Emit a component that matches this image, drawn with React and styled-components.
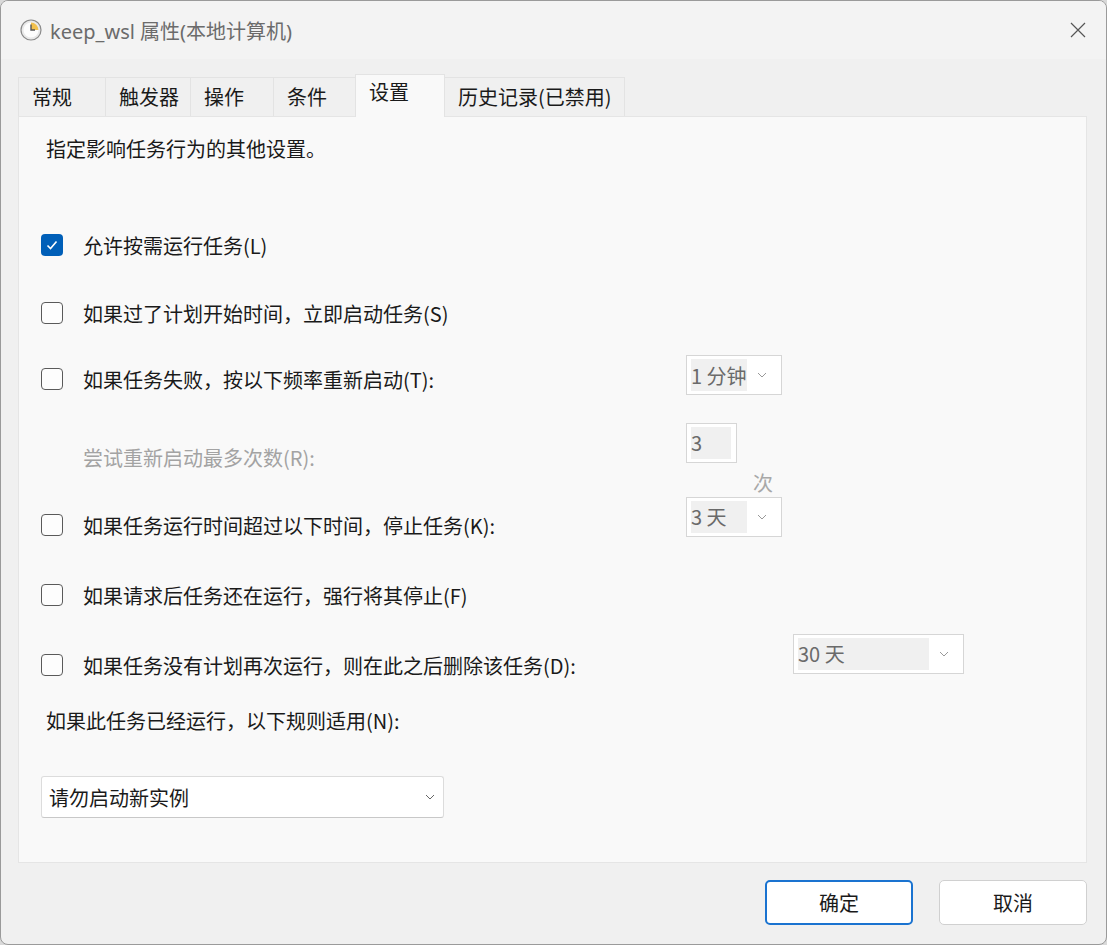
import React from 'react';
import styled, { createGlobalStyle } from 'styled-components';

const Global = createGlobalStyle`
  html, body { margin: 0; padding: 0; background: #d9d9d9; }
  body { font-family: 'Noto Sans CJK SC', 'Noto Sans', sans-serif; }
`;

const Window = styled.div`
  width: 1105px;
  height: 943px;
  background: #f0f0f0;
  border: 1px solid #9a9a9a;
  border-radius: 8px;
  display: flex;
  flex-direction: column;
  overflow: hidden;
  color: #1a1a1a;
`;

const TitleBar = styled.div`
  height: 58px;
  display: flex;
  align-items: center;
  padding: 0 20px 0 19px;
  gap: 8px;
  font-size: 20px;
  color: #6b6b6b;
  background: #f3f3f3;
`;

const Title = styled.span`
  flex: 1;
  font-family: 'Noto Sans', 'Noto Sans CJK SC', sans-serif;
`;

const Body = styled.div`
  flex: 1;
  padding: 14px 19px 0 17px;
  display: flex;
  flex-direction: column;
`;

const Tabs = styled.div`
  display: flex;
  align-items: flex-end;
  height: 43px;
`;

const Tab = styled.div`
  width: ${p => p.w}px;
  height: ${p => (p.active ? 43 : 39)}px;
  box-sizing: border-box;
  padding: ${p => (p.active ? '2px 0 0 13px' : '4px 0 0 13px')};
  font-size: 20px;
  background: ${p => (p.active ? '#f9f9f9' : '#f0f0f0')};
  border: 1px solid #e3e3e3;
  border-bottom: none;
  margin-right: -1px;
  position: relative;
  z-index: ${p => (p.active ? 2 : 1)};
  margin-bottom: ${p => (p.active ? '-1px' : 0)};
  white-space: nowrap;
`;

const Panel = styled.div`
  height: 747px;
  box-sizing: border-box;
  background: #f9f9f9;
  border: 1px solid #e5e5e5;
  padding: 19px 0 0 22px;
  display: flex;
  flex-direction: column;
`;

const Text = styled.div`
  font-size: 20px;
  line-height: 26px;
  padding-left: ${p => p.indent || 0}px;
  color: ${p => (p.disabled ? '#a3a3a3' : '#1a1a1a')};
`;

const Row = styled.div`
  margin-top: ${p => p.mt}px;
  height: 40px;
  display: grid;
  grid-template-columns: ${p => p.split || 645}px auto;
  align-items: center;
`;

const CheckLabel = styled.label`
  display: flex;
  align-items: center;
  gap: 20px;
  font-size: 20px;
  white-space: nowrap;
`;

const Box = styled.span`
  width: 22px;
  height: 22px;
  flex: none;
  box-sizing: border-box;
  border-radius: 4px;
  border: ${p => (p.checked ? 'none' : '1px solid #5a5a5a')};
  background: ${p => (p.checked ? '#005fb8' : '#fdfdfd')};
  display: flex;
  align-items: center;
  justify-content: center;
`;

const Combo = styled.div`
  width: ${p => p.w}px;
  height: 40px;
  box-sizing: border-box;
  border: 1px solid #d6d6d6;
  background: #fff;
  display: flex;
  align-items: center;
  padding: 0 4px;
  margin-top: ${p => p.dy || 0}px;
  color: #6a6a6a;
  font-size: 20px;
  white-space: nowrap;
`;

const Field = styled.span`
  width: ${p => p.w}px;
  height: 32px;
  background: #f0f0f0;
  display: flex;
  align-items: center;
  overflow: hidden;
`;

const Chevron = styled.span`
  flex: 1;
  display: flex;
  justify-content: center;
`;

const SpinWrap = styled.div`
  display: flex;
  align-items: flex-end;
  gap: 16px;
`;

const Unit = styled.span`
  font-size: 20px;
  color: #a8a8a8;
  margin-bottom: -34px;
`;

const Select = styled.div`
  margin-top: 35px;
  width: 403px;
  height: 42px;
  box-sizing: border-box;
  background: #fff;
  border: 1px solid #dcdcdc;
  border-bottom-color: #c8c8c8;
  border-radius: 3px;
  display: flex;
  align-items: center;
  justify-content: space-between;
  padding: 0 8px 0 7px;
  font-size: 20px;
`;

const Footer = styled.div`
  display: flex;
  justify-content: flex-end;
  gap: 26px;
  padding: 17px 0 0;
`;

const Button = styled.button`
  width: 148px;
  height: 45px;
  border-radius: 5px;
  background: #fff;
  border: ${p => (p.primary ? '2px solid #1a73d0' : '1px solid #d0d0d0')};
  font-family: inherit;
  font-size: 20px;
  color: #1a1a1a;
`;

const Check = ({ checked }) => (
  <Box checked={checked}>
    {checked && (
      <svg width="14" height="14" viewBox="0 0 14 14">
        <path d="M2.5 7.5 L5.5 10.5 L11.5 3.5" fill="none" stroke="#fff" strokeWidth="1.6" />
      </svg>
    )}
  </Box>
);

const Down = ({ color = '#999' }) => (
  <svg width="10" height="6" viewBox="0 0 10 6">
    <path d="M1 1 L5 5 L9 1" fill="none" stroke={color} strokeWidth="1" />
  </svg>
);

const ClockIcon = () => (
  <svg width="22" height="22" viewBox="0 0 22 22">
    <circle cx="11" cy="11" r="10" fill="#e9e9e9" stroke="#8a8a8a" strokeWidth="1.2" />
    <circle cx="11" cy="11" r="7.5" fill="#fdfdfd" />
    <path d="M11 11 L11 3.5 A7.5 7.5 0 0 1 18.5 11 Z" fill="#f2c14e" />
    <path d="M11 5.5 V11 H15" fill="none" stroke="#555" strokeWidth="1.4" />
  </svg>
);

const tabs = [
  { label: '常规', w: 88 },
  { label: '触发器', w: 86 },
  { label: '操作', w: 84 },
  { label: '条件', w: 83 },
  { label: '设置', w: 90, active: true },
  { label: '历史记录(已禁用)', w: 181 },
];

export default function App() {
  return (
    <>
      <Global />
      <Window>
        <TitleBar>
          <ClockIcon />
          <Title>keep_wsl 属性(本地计算机)</Title>
          <svg width="16" height="16" viewBox="0 0 16 16">
            <path d="M1 1 L15 15 M15 1 L1 15" stroke="#555" strokeWidth="1.2" />
          </svg>
        </TitleBar>
        <Body>
          <Tabs>
            {tabs.map(t => (
              <Tab key={t.label} w={t.w} active={t.active}>{t.label}</Tab>
            ))}
          </Tabs>
          <Panel>
            <Text indent={5}>指定影响任务行为的其他设置。</Text>

            <Row mt={63}>
              <CheckLabel><Check checked />允许按需运行任务(L)</CheckLabel>
            </Row>
            <Row mt={28}>
              <CheckLabel><Check />如果过了计划开始时间，立即启动任务(S)</CheckLabel>
            </Row>
            <Row mt={26}>
              <CheckLabel><Check />如果任务失败，按以下频率重新启动(T):</CheckLabel>
              <Combo w={96} dy={-8}>
                <Field w={56}>1 分钟</Field>
                <Chevron><Down /></Chevron>
              </Combo>
            </Row>
            <Row mt={39}>
              <Text disabled indent={42}>尝试重新启动最多次数(R):</Text>
              <SpinWrap>
                <Combo w={51} dy={-31}>
                  <Field w={40}>3</Field>
                </Combo>
                <Unit>次</Unit>
              </SpinWrap>
            </Row>
            <Row mt={27}>
              <CheckLabel><Check />如果任务运行时间超过以下时间，停止任务(K):</CheckLabel>
              <Combo w={96} dy={-17}>
                <Field w={56}>3 天</Field>
                <Chevron><Down /></Chevron>
              </Combo>
            </Row>
            <Row mt={30}>
              <CheckLabel><Check />如果请求后任务还在运行，强行将其停止(F)</CheckLabel>
            </Row>
            <Row mt={30} split={752}>
              <CheckLabel><Check />如果任务没有计划再次运行，则在此之后删除该任务(D):</CheckLabel>
              <Combo w={171} dy={-23}>
                <Field w={131}>30 天</Field>
                <Chevron><Down /></Chevron>
              </Combo>
            </Row>
            <Row mt={16}>
              <Text indent={5}>如果此任务已经运行，以下规则适用(N):</Text>
            </Row>
            <Select>
              <span>请勿启动新实例</span>
              <Down color="#666" />
            </Select>
          </Panel>
          <Footer>
            <Button primary>确定</Button>
            <Button>取消</Button>
          </Footer>
        </Body>
      </Window>
    </>
  );
}
